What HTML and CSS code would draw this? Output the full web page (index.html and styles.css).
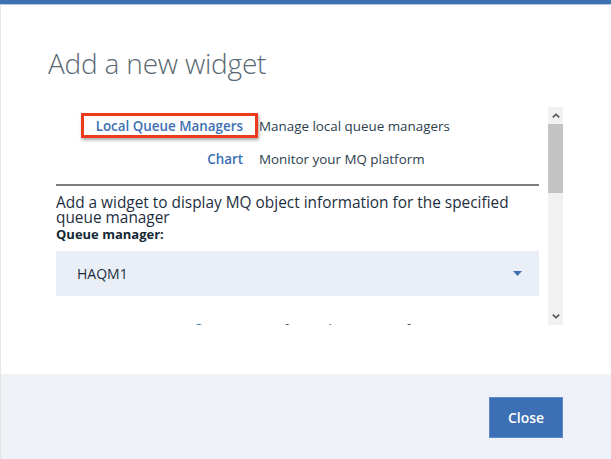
FILE: index.html
```html
<!DOCTYPE html>
<html>
<head>
<meta charset="utf-8">
<link rel="stylesheet" href="styles.css">
</head>
<body>
<div class="topbar"></div>
<div class="main">
  <h1 class="title">Add a new widget</h1>
  <div class="scrollwrap">
    <div class="content">
      <div class="types">
        <span class="label"><span class="hl">Local Queue Managers</span></span>
        <span class="desc">Manage local queue managers</span>
        <span class="label">Chart</span>
        <span class="desc">Monitor your MQ platform</span>
      </div>
      <div class="rule"></div>
      <p class="intro">Add a widget to display MQ object information for the specified queue manager</p>
      <div class="field-label">Queue manager:</div>
      <div class="select">
        <span>HAQM1</span>
        <svg class="caret" width="9" height="5" viewBox="0 0 9 5"><path d="M0 0h9L4.5 5z" fill="#3d70b2"/></svg>
      </div>
      <div class="types types-more">
        <span class="label">Queues</span>
        <span class="desc">Configure destination of messages</span>
      </div>
    </div>
    <div class="scrollbar">
      <div class="sb-btn"><svg width="8" height="5" viewBox="0 0 8 5"><path d="M0.8 4.4L4 1.3l3.2 3.1" fill="none" stroke="#505050" stroke-width="1.6"/></svg></div>
      <div class="sb-thumb"></div>
      <div class="sb-track"></div>
      <div class="sb-btn"><svg width="8" height="5" viewBox="0 0 8 5"><path d="M0.8 0.6L4 3.7l3.2-3.1" fill="none" stroke="#505050" stroke-width="1.6"/></svg></div>
    </div>
  </div>
</div>
<div class="footer">
  <button class="close">Close</button>
</div>
</body>
</html>
```

FILE: styles.css
```css
html, body {
  margin: 0;
  padding: 0;
  background: #ffffff;
}
body {
  font-family: "Open Sans", "Noto Sans", sans-serif;
  width: 611px;
  height: 459px;
  overflow: hidden;
}
.topbar {
  height: 4px;
  background: #3d6fb3;
  border-bottom: 1px solid #b3c7e4;
}
.main {
  height: 369px;
  box-sizing: border-box;
  border-left: 1px solid #e4e6e8;
  padding-top: 41px;
}
.title {
  margin: 0 0 27px 47px;
  font-size: 28px;
  line-height: 34px;
  font-weight: 300;
  color: #5a6872;
  letter-spacing: -0.2px;
}
.scrollwrap {
  display: flex;
  gap: 9px;
  margin-left: 55px;
  height: 218px;
}
.content {
  width: 483px;
  overflow: hidden;
  padding-top: 9px;
  box-sizing: border-box;
}
.types {
  display: grid;
  grid-template-columns: 187px 1fr;
  column-gap: 16px;
  row-gap: 13px;
  font-size: 13.4px;
  line-height: 20px;
}
.label {
  text-align: right;
  color: #3d70b2;
  font-weight: 600;
}
.hl {
  position: relative;
}
.hl::after {
  content: "";
  position: absolute;
  left: -15px;
  right: -15px;
  top: -4px;
  bottom: -3px;
  border: 3px solid #ee3a1c;
  box-shadow: 1px 2px 3px rgba(0, 0, 0, 0.35);
}
.desc {
  color: #2c3e4e;
}
.rule {
  height: 2px;
  background: #7d7d7d;
  margin-top: 15px;
}
.intro {
  margin: 9px 0 0 0;
  font-size: 15.4px;
  line-height: 15px;
  color: #1d2f3e;
}
.field-label {
  margin-top: 1px;
  font-size: 13px;
  font-weight: 700;
  line-height: 16px;
  color: #152935;
}
.select {
  margin-top: 9px;
  height: 45px;
  background: #eaeef6;
  display: flex;
  align-items: center;
  justify-content: space-between;
  padding: 0 17px 0 21px;
  font-size: 14px;
  color: #1d2f3e;
}
.caret {
  display: block;
}
.types-more {
  margin-top: 23px;
}
.scrollbar {
  width: 15px;
  display: flex;
  flex-direction: column;
  background: #f1f1f1;
}
.sb-btn {
  height: 17px;
  display: flex;
  align-items: center;
  justify-content: center;
}
.sb-thumb {
  height: 69px;
  background: #c3c3c3;
}
.sb-track {
  flex: 1;
}
.footer {
  height: 85px;
  background: #eef1f5;
  border-left: 1px solid #e4e6e8;
  box-sizing: border-box;
  display: flex;
  justify-content: flex-end;
  align-items: flex-start;
  padding: 23px 48px 0 0;
}
.close {
  width: 74px;
  height: 41px;
  background: #3d6fb4;
  border: 1px solid #5c8bd0;
  color: #ffffff;
  font-family: "Open Sans", "Noto Sans", sans-serif;
  font-size: 14px;
  font-weight: 600;
  padding: 0;
}
```
